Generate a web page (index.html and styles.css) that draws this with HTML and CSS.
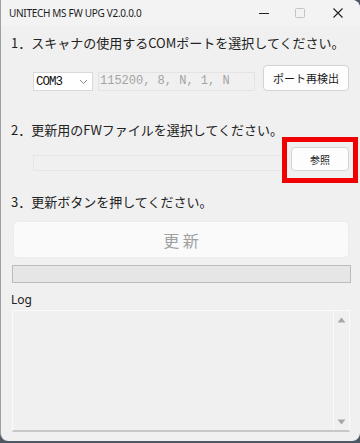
FILE: index.html
```html
<!DOCTYPE html>
<html lang="ja">
<head>
<meta charset="utf-8">
<link rel="stylesheet" href="styles.css">
</head>
<body>
<div class="window">
  <div class="titlebar">
    <span class="title">UNITECH MS FW UPG V2.0.0.0</span>
    <div class="controls">
      <span class="ctl min"><svg width="10" height="10" viewBox="0 0 10 10"><path d="M0 5.5h10" stroke="#222" stroke-width="1"/></svg></span>
      <span class="ctl max"><svg width="10" height="10" viewBox="0 0 10 10"><rect x="0.5" y="0.5" width="9" height="9" rx="1" fill="none" stroke="#c4c4c4" stroke-width="1"/></svg></span>
      <span class="ctl close"><svg width="10" height="10" viewBox="0 0 10 10"><path d="M0.5 0.5L9.5 9.5M9.5 0.5L0.5 9.5" stroke="#222" stroke-width="1.1"/></svg></span>
    </div>
  </div>
  <div class="content">
    <div class="label l1">1．スキャナの使用するCOMポートを選択してください。</div>
    <div class="row r1">
      <div class="combo"><span>COM3</span><svg width="9" height="6" viewBox="0 0 9 6"><path d="M1 1l3.5 3.5L8 1" fill="none" stroke="#888" stroke-width="1"/></svg></div>
      <div class="textbox params">115200, 8, N, 1, N</div>
      <button class="btn rescan">ポート再検出</button>
    </div>
    <div class="label l2">2．更新用のFWファイルを選択してください。</div>
    <div class="row r2">
      <div class="textbox path"></div>
      <div class="browse-wrap">
        <button class="btn browse">参照</button>
        <span class="highlight"></span>
      </div>
    </div>
    <div class="label l3">3．更新ボタンを押してください。</div>
    <button class="update">更 新</button>
    <div class="progress"></div>
    <div class="label logl">Log</div>
    <div class="log">
      <div class="scroll">
        <svg width="9" height="6" viewBox="0 0 9 6"><path d="M0.5 5.5L4.5 0.5L8.5 5.5Z" fill="#a8a8a8"/></svg>
        <svg width="9" height="6" viewBox="0 0 9 6"><path d="M0.5 0.5L4.5 5.5L8.5 0.5Z" fill="#a8a8a8"/></svg>
      </div>
    </div>
  </div>
</div>
</body>
</html>
```

FILE: styles.css
```css
html, body {
  margin: 0;
  padding: 0;
  background: #4c5864;
  width: 360px;
  height: 443px;
  overflow: hidden;
}
.window {
  width: 359px;
  height: 441px;
  background: #f0f0f0;
  border-left: 1px solid #a0a0a0;
  border-radius: 0 8px 8px 8px;
  overflow: hidden;
  font-family: "Noto Sans CJK JP", "Noto Sans", sans-serif;
  font-size: 13px;
  color: #1a1a1a;
}
.titlebar {
  height: 26px;
  background: #f3f3f3;
  display: flex;
  align-items: center;
  justify-content: space-between;
}
.title {
  font-family: "Noto Sans", "Open Sans", sans-serif;
  font-size: 10px;
  color: #1c1c1c;
  padding-left: 8px;
  letter-spacing: -0.3px;
}
.controls {
  display: flex;
  height: 26px;
}
.ctl {
  width: 36px;
  height: 26px;
  display: flex;
  align-items: center;
  justify-content: center;
}
.ctl.close { width: 40px; padding-right: 2px; }
.content {
  padding: 0 0 0 10px;
  display: flex;
  flex-direction: column;
}
.label {
  height: 16px;
  line-height: 16px;
  white-space: nowrap;
  font-size: 13px;
  color: #222;
}
.l1 { margin-top: 9px; }
.row {
  display: flex;
  align-items: flex-end;
}
.r1 { margin-top: 14px; height: 26px; padding-left: 22px; }
.combo {
  height: 17px;
  background: #fff;
  border: 1px solid #d9d9d9;
  display: flex;
  align-items: center;
  justify-content: space-between;
  padding: 0 4px 0 2px;
  box-sizing: content-box;
  width: 52px;
  font-family: "Liberation Mono", monospace;
  font-size: 12.5px;
  color: #111;
  letter-spacing: -1px;
}
.textbox {
  background: #f0f0f0;
  border: 1px solid #e4e4e4;
  box-sizing: border-box;
}
.params {
  margin-left: 5px;
  width: 157px;
  height: 19px;
  line-height: 17px;
  font-family: "Liberation Mono", monospace;
  font-size: 12px;
  color: #a4a4a4;
  padding-left: 1px;
  white-space: nowrap;
}
.btn {
  background: #fdfdfd;
  border: 1px solid #d3d3d3;
  border-radius: 4px;
  font-family: "Noto Sans CJK JP", sans-serif;
  font-size: 11px;
  color: #1a1a1a;
  padding: 0;
  box-sizing: border-box;
}
.rescan {
  margin-left: 8px;
  width: 86px;
  height: 26px;
}
.l2 { margin-top: 31px; }
.r2 { margin-top: 9px; height: 24px; padding-left: 22px; }
.path {
  width: 251px;
  height: 16px;
  border-color: #e6e6e6;
}
.browse-wrap {
  position: relative;
  margin-left: 7px;
  width: 58px;
  height: 24px;
}
.browse {
  width: 58px;
  height: 24px;
  font-size: 10px;
}
.highlight {
  position: absolute;
  left: -9px;
  right: -9px;
  top: -10px;
  bottom: -12px;
  border: 5px solid #f00000;
}
.l3 { margin-top: 23px; }
.update {
  margin: 11px 0 0 2px;
  width: 336px;
  height: 37px;
  background: #fafafa;
  border: 1px solid #ececec;
  border-radius: 4px;
  font-family: "Noto Sans CJK JP", sans-serif;
  font-size: 16px;
  color: #a0a0a0;
  padding: 0;
}
.progress {
  margin: 7px 0 0 1px;
  width: 339px;
  height: 18px;
  box-sizing: border-box;
  background: #e6e6e6;
  border: 1px solid #bcbcbc;
}
.logl { margin-top: 9px; font-family: "Noto Sans", sans-serif; font-size: 12px; }
.log {
  margin: 2px 0 0 1px;
  width: 338px;
  height: 122px;
  box-sizing: border-box;
  background: #f0f0f0;
  border: 1px solid #fbfbfb;
  border-bottom: 2px solid #c8c8c8;
  display: flex;
  justify-content: flex-end;
}
.scroll {
  width: 15px;
  border-left: 1px solid #fbfbfb;
  display: flex;
  flex-direction: column;
  justify-content: space-between;
  align-items: center;
  padding: 6px 0 5px;
}
```
